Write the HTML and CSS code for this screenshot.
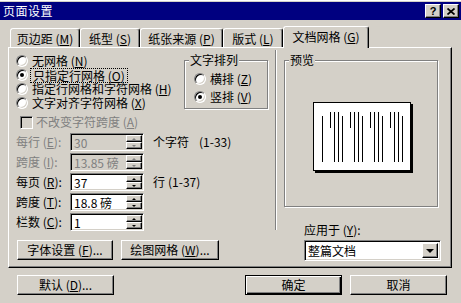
FILE: index.html
```html
<!DOCTYPE html>
<html lang="zh-CN">
<head>
  <meta charset="utf-8">
  <title>页面设置</title>
  <link rel="stylesheet" href="styles.css">
</head>
<body>
  <div class="dialog">
    <div class="titlebar">
      <span class="title">页面设置</span>
      <span class="tbtn help">?</span>
      <span class="tbtn close"><svg width="8" height="7" viewBox="0 0 8 7"><path d="M0.5 0.5L7.5 6.5M7.5 0.5L0.5 6.5" stroke="#000" stroke-width="1.7"/></svg></span>
    </div>

    <div class="tabs">
      <span class="tab t-margin">页边距 (<u>M</u>)</span>
      <span class="tab t-paper">纸型 (<u>S</u>)</span>
      <span class="tab t-source">纸张来源 (<u>P</u>)</span>
      <span class="tab t-layout">版式 (<u>L</u>)</span>
      <span class="tab active">文档网格 (<u>G</u>)</span>
    </div>

    <div class="panel">
      <div class="grid-side">
        <div class="top">
          <div class="radios">
            <label class="opt"><i class="radio"></i>无网格 (<u>N</u>)</label>
            <label class="opt"><i class="radio on"></i><span class="focus">只指定行网格 (<u>O</u>)</span></label>
            <label class="opt"><i class="radio"></i>指定行网格和字符网格 (<u>H</u>)</label>
            <label class="opt"><i class="radio"></i>文字对齐字符网格 (<u>X</u>)</label>
          </div>
          <div class="gbox arrange">
            <div class="gbox-label">文字排列</div>
            <label class="opt"><i class="radio"></i>横排 (<u>Z</u>)</label>
            <label class="opt"><i class="radio on"></i>竖排 (<u>V</u>)</label>
          </div>
        </div>

        <label class="opt check dis"><i class="checkbox"></i>不改变字符跨度 (<u>A</u>)</label>

        <div class="fields">
          <div class="field dis">
            <span class="flabel">每行 (<u>E</u>):</span>
            <span class="spin"><span class="spin-val">30</span><span class="spin-btns"><b></b><b></b></span></span>
            <span class="unit">个字符</span><span class="range wide">(1-33)</span>
          </div>
          <div class="field dis">
            <span class="flabel">跨度 (<u>I</u>):</span>
            <span class="spin"><span class="spin-val">13.85 磅</span><span class="spin-btns"><b></b><b></b></span></span>
          </div>
          <div class="field">
            <span class="flabel">每页 (<u>R</u>):</span>
            <span class="spin"><span class="spin-val">37</span><span class="spin-btns"><b></b><b></b></span></span>
            <span class="unit">行</span><span class="range">(1-37)</span>
          </div>
          <div class="field">
            <span class="flabel">跨度 (<u>T</u>):</span>
            <span class="spin"><span class="spin-val">18.8 磅</span><span class="spin-btns"><b></b><b></b></span></span>
          </div>
          <div class="field">
            <span class="flabel">栏数 (<u>C</u>):</span>
            <span class="spin"><span class="spin-val">1</span><span class="spin-btns"><b></b><b></b></span></span>
          </div>
        </div>

        <div class="btn-row">
          <button class="btn font-btn">字体设置 (<u>F</u>)...</button>
          <button class="btn draw-btn">绘图网格 (<u>W</u>)...</button>
        </div>
      </div>

      <div class="vsep"></div>

      <div class="preview-side">
        <div class="gbox preview">
          <div class="gbox-label">预览</div>
          <div class="page">
            <svg width="96" height="67" viewBox="0 0 96 67">
              <path stroke="#000" stroke-width="1" d="M8.5 13V59M16.5 9V25M20.5 9V59M24.5 9V59M28.5 13V59M36.5 9V25M40.5 9V59M44.5 9V59M48.5 13V59M56.5 9V25M60.5 9V59M64.5 9V59M68.5 13V59M76.5 9V25M80.5 9V59M84.5 9V59M88.5 13V59"/>
            </svg>
          </div>
        </div>
        <div class="apply-label">应用于 (<u>Y</u>):</div>
        <div class="select"><span class="select-val">整篇文档</span><span class="drop"></span></div>
      </div>
    </div>

    <div class="footer">
      <button class="btn">默认 (<u>D</u>)...</button>
      <button class="btn default">确定</button>
      <button class="btn cancel">取消</button>
    </div>
  </div>
</body>
</html>
```

FILE: styles.css
```css
body{margin:0;background:#d4d0c8;font:12px "Noto Sans CJK SC","Liberation Sans",sans-serif;color:#000}
u{text-decoration:underline;text-underline-offset:1px}

.dialog{width:461px;height:303px;box-sizing:border-box;border-top:1px solid #fff;padding-top:1px;display:flex;flex-direction:column}

/* title bar */
.titlebar{height:18px;flex:none;background:#000080;color:#fff;display:flex;align-items:center;padding:0 2px 0 3px;line-height:16px}
.title{flex:1;letter-spacing:.5px}
.tbtn{width:16px;height:14px;box-sizing:border-box;background:#d4d0c8;border:1px solid;border-color:#fff #000 #000 #fff;box-shadow:inset -1px -1px #808080;display:flex;align-items:center;justify-content:center;color:#000;font:bold 11px "Liberation Sans",sans-serif}
.help{margin-right:2px}

/* tabs */
.tabs{display:flex;align-items:flex-end;height:21px;flex:none;margin:6px 0 0 10px;position:relative;z-index:1}
.tab{height:19px;box-sizing:border-box;border:1px solid;border-bottom:0;border-color:#fff #000 transparent #fff;border-radius:3px 3px 0 0;box-shadow:inset -1px 0 #808080;display:flex;align-items:center;justify-content:center;white-space:nowrap;background:#d4d0c8;line-height:15px}
.t-margin{width:70px}
.t-paper{width:60px}
.t-source{width:83px}
.t-layout{width:60px}
.tab.active{width:86px;height:22px;margin-bottom:-1px;padding-bottom:2px}

/* panel */
.panel{height:221px;flex:none;box-sizing:border-box;margin:0 9px 0 8px;border:1px solid;border-color:#fff #000 #000 #fff;box-shadow:inset -1px -1px #808080;display:flex;align-items:flex-start}
.grid-side{width:266px;flex:none;box-sizing:border-box;padding:6px 0 0 7px}
.top{display:flex;height:56px}
.radios{width:168px}
.opt{display:flex;align-items:center;height:14px;line-height:14px;white-space:nowrap}
.radio{width:12px;height:12px;flex:none;box-sizing:border-box;margin-right:4px;border-radius:50%;background:#fff;border:1px solid;border-color:#808080 #fff #fff #808080;box-shadow:inset 1px 1px #000,inset -1px -1px #d4d0c8;display:flex;align-items:center;justify-content:center}
.radio.on::after{content:"";width:4px;height:4px;border-radius:50%;background:#000}
.focus{outline:1px dotted #000;margin-left:-1px;padding:0 2px;line-height:13px}

.gbox{box-sizing:border-box;border:1px solid #808080;box-shadow:inset 1px 1px #fff,1px 1px #fff}
.gbox-label{width:max-content;margin:-8px 0 0 4px;padding:0 1px;background:#d4d0c8;line-height:13px}
.arrange{width:84px;height:49px;margin-top:6px;padding-left:9px;display:flex;flex-direction:column;gap:4px}
.arrange .gbox-label{margin-left:-5px;margin-bottom:2px}

.check{margin-top:5px}
.checkbox{width:13px;height:13px;flex:none;box-sizing:border-box;margin:0 3px 0 4px;background:#d4d0c8;border:1px solid;border-color:#808080 #fff #fff #808080;box-shadow:inset 1px 1px #000,inset -1px -1px #d4d0c8}
.dis{color:#808080}

.fields{margin-top:4px;display:flex;flex-direction:column;gap:2px}
.field{display:flex;align-items:center;height:18px;line-height:14px;white-space:nowrap}
.flabel{width:54px}
.spin{width:74px;height:18px;box-sizing:border-box;display:flex;background:#fff;border:1px solid;border-color:#808080 #fff #fff #808080;box-shadow:inset 1px 1px #000,inset -1px -1px #d4d0c8;padding:1px 1px 1px 3px}
.spin-val{flex:1;padding-top:1px;color:#000}
.field.dis .spin{background:#d4d0c8}
.field.dis .spin-val{color:#808080}
.spin-btns{width:16px;display:flex;flex-direction:column}
.spin-btns b{flex:1;box-sizing:border-box;background:#d4d0c8;border:1px solid;border-color:#fff #000 #000 #fff;box-shadow:inset -1px -1px #808080;display:flex;align-items:center;justify-content:center}
.spin-btns b::after{content:"";border-left:2px solid transparent;border-right:2px solid transparent;border-bottom:2px solid #000}
.spin-btns b+b::after{border-bottom:0;border-top:2px solid #000}
.field.dis .spin-btns b::after{border-bottom-color:#808080;border-top-color:#808080}
.unit{margin-left:9px;color:#000}
.range{margin-left:3px;color:#000}
.range.wide{margin-left:10px}

.btn{font:inherit;color:#000;padding:0;height:20px;line-height:16px;box-sizing:border-box;background:#d4d0c8;border:1px solid;border-color:#fff #000 #000 #fff;box-shadow:inset -1px -1px #808080;white-space:nowrap}
.btn-row{display:flex;gap:8px;margin:9px 0 0 1px}
.font-btn{width:96px}
.draw-btn{width:98px}

.vsep{width:0;height:180px;margin-top:2px;border-left:1px solid #808080;border-right:1px solid #fff}

.preview-side{flex:1;padding-left:7px}
.preview{width:154px;height:147px;margin-top:12px}
.page{width:98px;height:69px;box-sizing:border-box;margin:36px 0 0 28px;border:1px solid #000;background:#fff;box-shadow:2px 2px 0 #000}
.page svg{display:block}
.apply-label{margin:16px 0 0 20px;line-height:13px}
.select{width:137px;height:21px;box-sizing:border-box;margin:4px 0 0 20px;display:flex;background:#fff;border:1px solid;border-color:#808080 #fff #fff #808080;box-shadow:inset 1px 1px #000,inset -1px -1px #d4d0c8;padding:2px 2px 2px 3px}
.select-val{flex:1;line-height:15px}
.drop{width:16px;box-sizing:border-box;background:#d4d0c8;border:1px solid;border-color:#fff #000 #000 #fff;box-shadow:inset -1px -1px #808080;display:flex;align-items:center;justify-content:center}
.drop::after{content:"";border-left:4px solid transparent;border-right:4px solid transparent;border-top:4px solid #000}

/* footer */
.footer{display:flex;padding:7px 14px 0 17px}
.footer .btn{width:97px}
.default{margin-left:auto;border-color:#000;box-shadow:inset 1px 1px #fff,inset -1px -1px #000,inset -2px -2px #808080}
.cancel{margin-left:8px}
```
